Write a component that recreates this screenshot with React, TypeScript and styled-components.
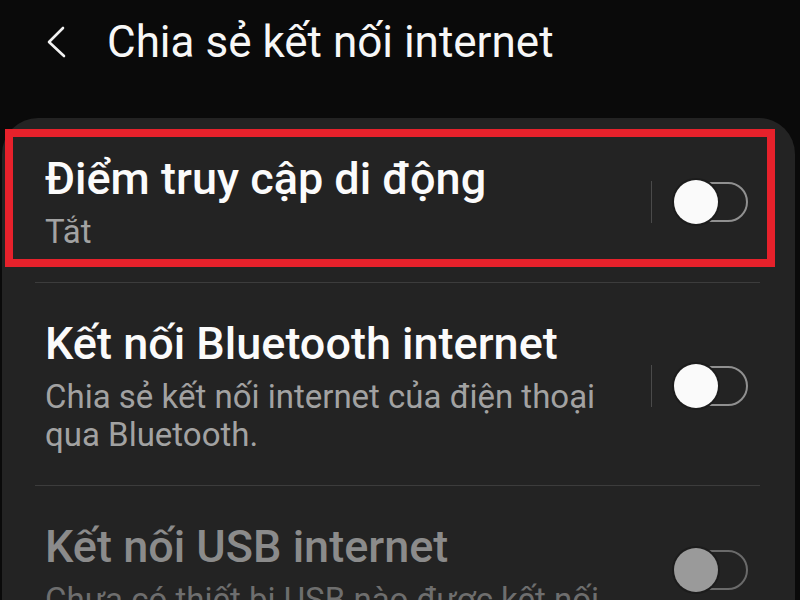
import React from "react";
import styled, { createGlobalStyle } from "styled-components";

const GlobalStyle = createGlobalStyle`
  html, body {
    margin: 0;
    padding: 0;
    background: #0a0a0a;
  }
  body {
    font-family: Roboto, "Noto Sans", "Liberation Sans", sans-serif;
    -webkit-font-smoothing: antialiased;
  }
  * { box-sizing: border-box; }
`;

const Screen = styled.div`
  width: 800px;
  height: 600px;
  overflow: hidden;
  background: #0a0a0a;
  display: flex;
  flex-direction: column;
`;

const Header = styled.header`
  height: 118px;
  flex-shrink: 0;
  padding: 16px 0 0 46px;
`;

const HeaderRow = styled.div`
  height: 52px;
  display: flex;
  align-items: center;
  gap: 41px;
`;

const BackButton = styled.button`
  width: 20px;
  height: 32px;
  padding: 0;
  border: none;
  background: none;
  display: flex;
  align-items: center;
  justify-content: center;
  cursor: pointer;
`;

const Title = styled.h1`
  margin: 0;
  font-size: 44px;
  line-height: 52px;
  font-weight: 400;
  color: #f7f7f7;
  white-space: nowrap;
`;

const Card = styled.section`
  flex: 1;
  margin: 0 5px 0 2px;
  background: #232323;
  border-radius: 36px 36px 0 0;
  display: flex;
  flex-direction: column;
`;

const Row = styled.div`
  position: relative;
  display: flex;
  align-items: center;
  padding: 35px 47px 31px 43px;
`;

const Highlight = styled.div`
  position: absolute;
  left: 3px;
  top: 11px;
  width: 770px;
  height: 138px;
  border: 8px solid #e6212b;
  pointer-events: none;
`;

const TextCol = styled.div`
  flex: 1;
  min-width: 0;
  display: flex;
  flex-direction: column;
  gap: 8px;
`;

const ItemTitle = styled.div<{ $disabled?: boolean }>`
  font-size: 45px;
  line-height: 52px;
  font-weight: 500;
  color: ${(p) => (p.$disabled ? "#8b8b8b" : "#fbfbfb")};
  white-space: nowrap;
`;

const ItemSub = styled.div<{ $disabled?: boolean }>`
  font-size: 33px;
  line-height: 38px;
  font-weight: 400;
  color: ${(p) => (p.$disabled ? "#6e6e6e" : "#a2a2a2")};
  padding-right: 20px;
`;

const VDivider = styled.div`
  width: 1px;
  height: 42px;
  background: #4a4a4a;
  margin-right: 21px;
  flex-shrink: 0;
`;

const Switch = styled.div`
  position: relative;
  width: 75px;
  height: 44px;
  flex-shrink: 0;
`;

const Track = styled.div<{ $disabled?: boolean }>`
  position: absolute;
  left: 14px;
  right: 0;
  top: 2px;
  bottom: 2px;
  border-radius: 20px;
  border: 2px solid ${(p) => (p.$disabled ? "#6a6a6a" : "#909090")};
`;

const Knob = styled.div<{ $disabled?: boolean }>`
  position: absolute;
  left: 1px;
  top: 0;
  width: 44px;
  height: 44px;
  border-radius: 50%;
  background: ${(p) => (p.$disabled ? "#9a9a9a" : "#fafafa")};
  box-shadow: 0 0 0 2px #1c1c1c;
`;

const Separator = styled.hr`
  margin: 0 35px 0 33px;
  border: none;
  height: 1px;
  background: #3c3c3c;
  flex-shrink: 0;
`;

function Toggle({ disabled }: { disabled?: boolean }) {
  return (
    <Switch role="switch" aria-checked={false}>
      <Track $disabled={disabled} />
      <Knob $disabled={disabled} />
    </Switch>
  );
}

type Item = {
  title: string;
  sub: string;
  disabled?: boolean;
  highlighted?: boolean;
};

const items: Item[] = [
  { title: "Điểm truy cập di động", sub: "Tắt", highlighted: true },
  {
    title: "Kết nối Bluetooth internet",
    sub: "Chia sẻ kết nối internet của điện thoại qua Bluetooth.",
  },
  {
    title: "Kết nối USB internet",
    sub: "Chưa có thiết bị USB nào được kết nối",
    disabled: true,
  },
];

export default function App() {
  return (
    <>
      <GlobalStyle />
      <Screen>
        <Header>
          <HeaderRow>
            <BackButton aria-label="Quay lại">
              <svg width="20" height="32" viewBox="0 0 20 32" fill="none">
                <path
                  d="M17 2 L3 16 L18 30"
                  stroke="#f2f2f2"
                  strokeWidth="2.6"
                  strokeLinecap="round"
                  strokeLinejoin="round"
                />
              </svg>
            </BackButton>
            <Title>Chia sẻ kết nối internet</Title>
          </HeaderRow>
        </Header>
        <Card>
          {items.map((item, i) => (
            <React.Fragment key={item.title}>
              {i > 0 && <Separator />}
              <Row>
                {item.highlighted && <Highlight />}
                <TextCol>
                  <ItemTitle $disabled={item.disabled}>{item.title}</ItemTitle>
                  <ItemSub $disabled={item.disabled}>{item.sub}</ItemSub>
                </TextCol>
                {!item.disabled && <VDivider />}
                <Toggle disabled={item.disabled} />
              </Row>
            </React.Fragment>
          ))}
        </Card>
      </Screen>
    </>
  );
}
